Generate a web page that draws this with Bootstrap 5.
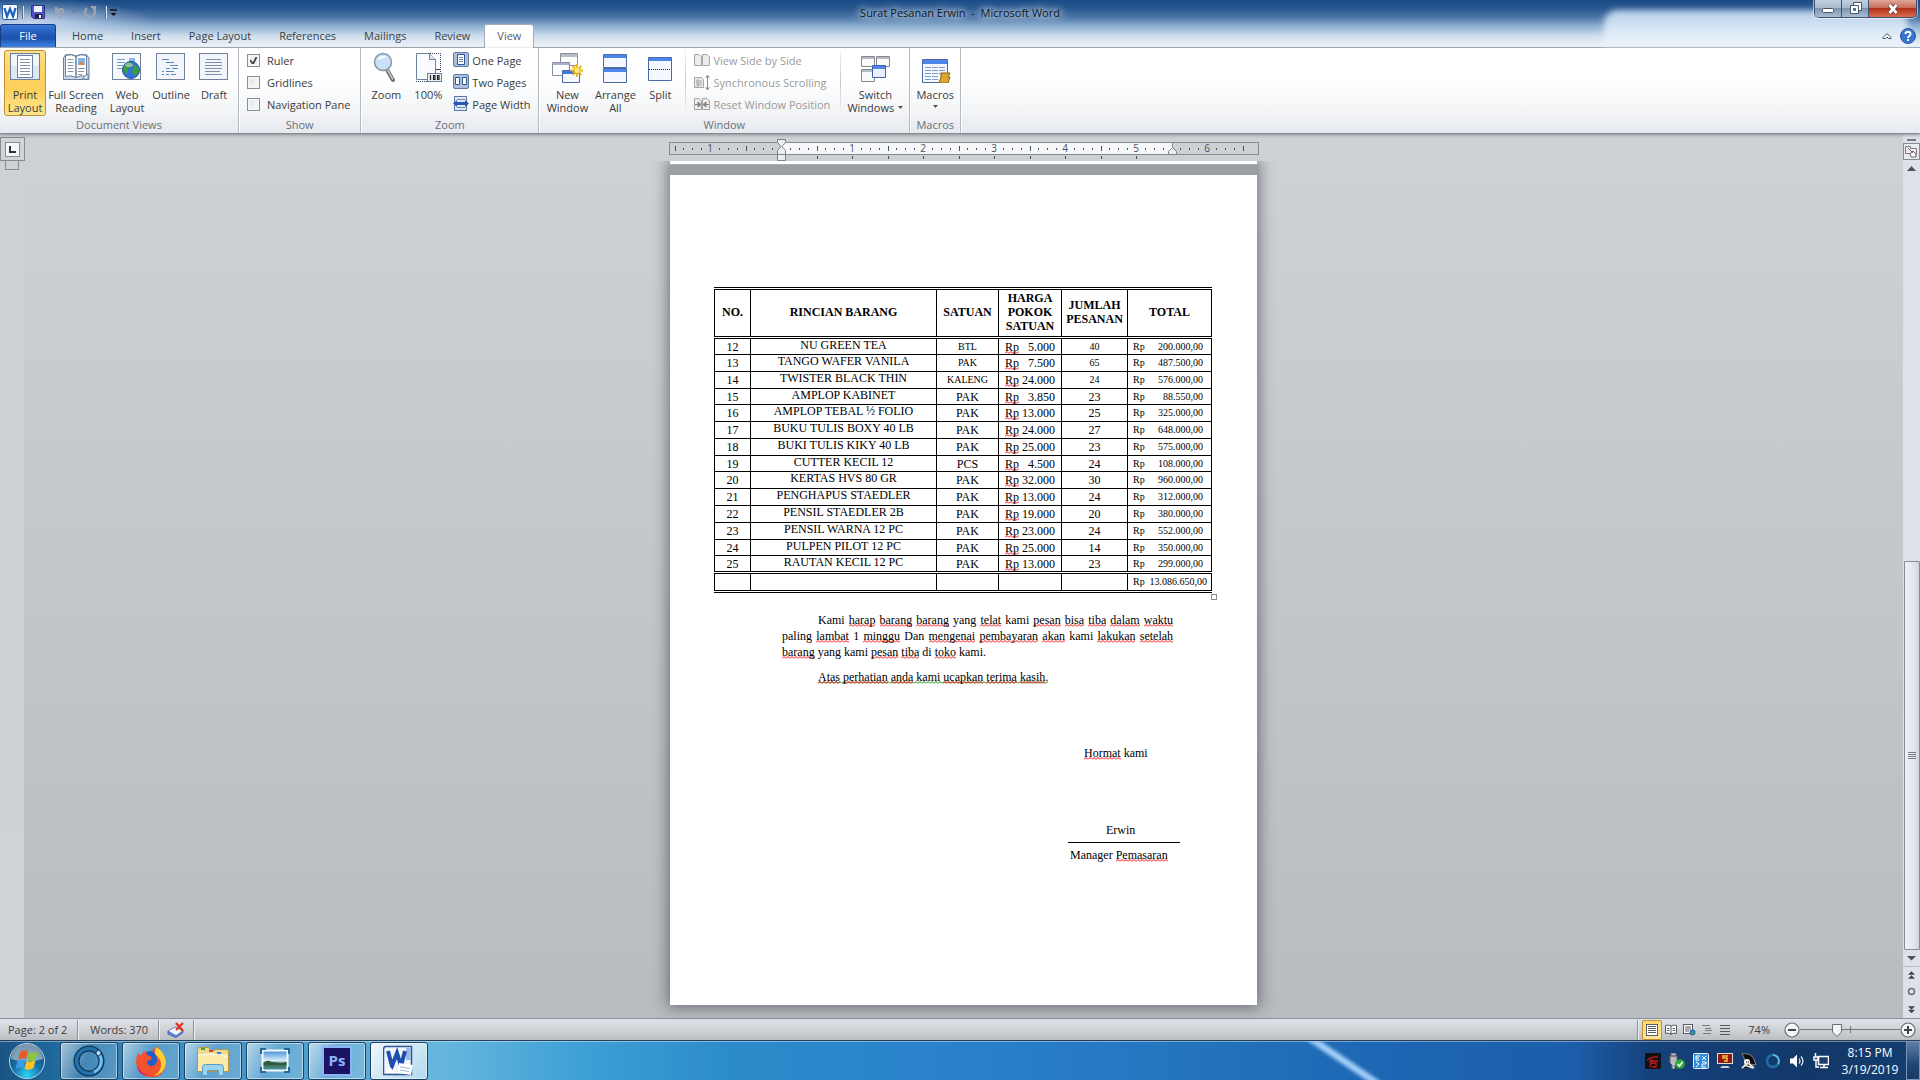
<!DOCTYPE html>
<html lang="id">
<head>
<meta charset="utf-8">
<meta name="viewport" content="width=device-width, initial-scale=1">
<title>Surat Pesanan Erwin - Microsoft Word</title>
<link href="https://cdn.jsdelivr.net/npm/bootstrap@5.3.0/dist/css/bootstrap.min.css" rel="stylesheet">
<style>
body{font-family:"Open Sans","Noto Sans",sans-serif;font-size:11px;line-height:13px;color:#3b3b3b;background:#c4c7cb}
button,input{font:inherit;color:inherit}
svg{display:block;flex:none}
a{text-decoration:none;color:inherit}
.btn-flat{background:none;border:0;padding:0}

/* title bar and tabs */
.glass{height:48px;border-bottom:1px solid #a3acb8;background:
 radial-gradient(ellipse 140px 26px at 30px 22px,rgba(225,235,250,.75),rgba(225,235,250,0) 90%),
 linear-gradient(#194b87 0,#27568e 8px,#5179a9 18px,#8caed0 26px,#cfdeec 36px,#eef4f8 47px)}
.reflection{right:12px;top:10px;width:304px;height:37px;border-radius:14px 14px 0 0;background:linear-gradient(#c3daf2,#d9e9f8 40%,#f0f6fc);filter:blur(3px);opacity:.9}
.title-row{height:24px}
.doc-title{color:#101820;font-size:11px;white-space:pre;text-shadow:0 0 6px #dbe8f5,0 0 8px #dbe8f5,0 0 12px #b9cfe6;padding:6px 0 0}
.quick{padding:4px 0 0 2px;gap:4px}
.qsep{width:1px;height:13px;background:#5f6f87;box-shadow:1px 0 #d8e2ee}
.win-btns{right:3px;top:0;height:18px;border:1px solid #3e526e;border-top:0;border-radius:0 0 5px 5px;overflow:hidden;box-shadow:0 0 0 1px rgba(255,255,255,.55)}
.win-btns button{background:linear-gradient(#c2cfde,#a9bace 45%,#7e94b0 50%,#a9bdd4);border-right:1px solid #3e526e;width:27px;display:flex;align-items:center;justify-content:center}
.win-btns .win-close{width:47px;border-right:0;background:linear-gradient(#dfa79c,#c96c58 45%,#b5301a 50%,#d86f50)}
.tab-row{height:23px;position:relative}
.tab-row a{padding:5px 14px 0;height:23px;font-size:11px;line-height:14px;color:#3a3f46}
.tab-row .file-tab{width:56px;color:#fff;background:linear-gradient(#3b78d6,#1f57b5 45%,#1c51ad 60%,#3f84e2);border:1px solid #173f8c;border-bottom:0;border-radius:3px 3px 0 0;text-align:center;padding:4px 0 0;margin-right:2px}
.tab-row .view-tab{background:#fff;border:1px solid #a3acb8;border-bottom:0;border-radius:3px 3px 0 0;height:24px;padding:4px 12px 0;color:#5a6068}

/* ribbon */
.ribbon{height:86px;background:linear-gradient(#fff 0,#fff 40%,#f2f4f6 75%,#e6e9ee);border-bottom:1px solid #868b92;position:relative;z-index:2;box-shadow:0 1px 3px rgba(90,95,105,.6)}
.rgroup{display:flex;flex-direction:column;border-right:1px solid #b5bac2;box-shadow:1px 0 #fff;height:85px}
.rgroup-body{display:flex;height:69px;padding-top:2px}
.rgroup-name{text-align:center;color:#6a7078;line-height:15px}
.big{height:66px;border:1px solid transparent;border-radius:3px;background:none;padding:0;display:flex;flex-direction:column;align-items:center;line-height:13px;white-space:nowrap}
.big svg{margin-bottom:5px}
.big.on{border-color:#c2902f;background:linear-gradient(#fbe08a,#fdd466 30%,#fdd05c 60%,#fee78e)}
.w40{width:40px}.w42{width:42px}.w46{width:46px}.w48{width:48px}.w60{width:60px}
.pe10{padding-right:10px}
.smallcol{display:flex;flex-direction:column;white-space:nowrap;margin-top:-1px}
.smallcol>*{height:22px;display:flex;align-items:center;gap:3px}
.smallcol .off{color:#9a9a9a}
.rsep{width:1px;height:62px;background:linear-gradient(#f4f5f7,#c3c7cd 50%,#f0f1f3)}
.box-check{appearance:none;width:13px;height:13px;border:1px solid #8a8f96;background:linear-gradient(135deg,#dcdfe3,#fff);box-shadow:inset 0 0 0 2px #f4f5f6;margin:0 4px 0 0}
.box-check:checked{background:url("data:image/svg+xml,%3Csvg xmlns='http://www.w3.org/2000/svg' width='11' height='11'%3E%3Cpath d='M2 5l3 4 4-8' fill='none' stroke='%23444' stroke-width='1.8'/%3E%3C/svg%3E") #eceef0}

/* document area */
.work{background:linear-gradient(#ced1d6,#b8bbc0);min-height:0}
.vruler{width:24px;background:linear-gradient(#ced1d6,#cfd2d7)}
.tabsel{width:25px;height:24px;border:1px solid #868b92;background:#d0d4d9;margin:3px 0 0}
.tabsel span{width:15px;height:15px;border:1px solid #868b92;background:#f6f7f9}
.vmark{width:14px;height:9px;border:1px solid #868b92;border-top:0;margin-left:5px}
.stack{width:587px}
.ruler{margin:5px 0 0 -1px;overflow:visible}
.sheets{box-shadow:0 0 14px 2px rgba(50,55,60,.6);background:#9b9ea2}
.sheets .prev{height:4px;background:#fff;border-bottom:1px solid #9fb0bd}
.paper{margin-top:10px;background:#fff;min-height:830px;padding:112px 44px 0;color:#000;font-family:"Liberation Serif",serif;font-size:12px;line-height:16px}
.clipper{clip-path:inset(0 -20px -20px -20px)}
.order{width:497px;table-layout:fixed;border-collapse:collapse;border:1px solid #000;border-width:3px 1px;border-style:double solid;line-height:14px}
.order th,.order td{border:1px solid #000;padding:0;text-align:center;vertical-align:middle}
.order th{height:49px;border-bottom:3px double #000;border-top:3px double #000;font-weight:bold;padding-bottom:2px}
.order td{height:17px}
.order tbody tr:nth-child(4) td,.order tbody tr:nth-child(8) td,.order tbody tr:nth-child(13) td{height:16px}
.order .item{vertical-align:top;line-height:12px}
.order .tiny{font-size:10px}
.order .price>div{display:flex;justify-content:space-between;padding:0 6px}
.order .sum{font-size:10px}
.order .sum>div{display:flex;justify-content:space-between;padding:0 8px 0 5px}
.order tfoot td{border-top:3px double #000;border-bottom:3px double #000;height:19px}
.order tfoot .sum>div{padding:0 4px 0 5px}
.endmark{width:6px;height:6px;border:1px solid #8a8a8a;margin:1px -4px 0 auto}
.sq,.gr{text-decoration:none;background:url("data:image/svg+xml,%3Csvg xmlns='http://www.w3.org/2000/svg' width='4' height='3'%3E%3Cpath d='M0 2.5L2 .5L4 2.5' fill='none' stroke='%23f00'/%3E%3C/svg%3E") repeat-x left bottom}
.gr{background-image:url("data:image/svg+xml,%3Csvg xmlns='http://www.w3.org/2000/svg' width='4' height='3'%3E%3Cpath d='M0 2.5L2 .5L4 2.5' fill='none' stroke='%23008a00'/%3E%3C/svg%3E")}
.letter{padding:12px 40px 0 68px}
.letter p{margin:0 0 9px;text-indent:36px;text-align:justify}
.sign{width:112px;margin:60px 33px 0 auto}
.sign-name{margin-top:61px;padding:0 0 4px 38px;border-bottom:1px solid #000}
.sign-role{padding:4px 0 0 2px;white-space:nowrap}

/* vertical scroll bar */
.vscroll{width:17px;background:#dde2ea}
.thumb{flex:388 0 0;border:1px solid #868b94;border-radius:1px;background:linear-gradient(90deg,#eef1f7,#e3e7ec 60%,#cfd4d9);width:16px}
.trough{flex:388 0 0}

/* status bar */
.status{height:22px;border-top:1px solid #8b9099;background:linear-gradient(#e0e3e9,#cfd3d7 50%,#bbbfc3);color:#3c3c3c}
.status .ssep{width:1px;height:20px;background:#8f9398;box-shadow:1px 0 #edf0f3}
.vbtn{width:18px;height:20px;display:flex;align-items:center;justify-content:center}
.vbtn.on{width:20px;background:linear-gradient(#fbd775,#fde49b);border:1px solid #c2902f;border-radius:2px}
.zoomtext{padding:0 14px 0 14px}
.zoombar{appearance:none;width:100px;height:20px;background:linear-gradient(#70757c,#70757c) center/100% 1px no-repeat,linear-gradient(#70757c,#70757c) 50px center/1px 7px no-repeat}
.zoombar::-webkit-slider-thumb{appearance:none;width:10px;height:14px;background:url("data:image/svg+xml,%3Csvg xmlns='http://www.w3.org/2000/svg' width='10' height='14'%3E%3Cpath d='M.5 1.5h9v7.500L5 13.500.5 9z' fill='%23f2f4f6' stroke='%23666c75'/%3E%3C/svg%3E")}

/* taskbar */
.taskbar{height:40px;border-top:1px solid #26405c;box-shadow:inset 0 1px rgba(255,255,255,.4);overflow:hidden;background:linear-gradient(90deg,#1b5484 0,#1f6a9e 3%,#3a8cc2 8%,#4f9fcd 16%,#66b6de 23%,#3fa1d6 30%,#2c8bca 38%,#2a81cb 50%,#2374bd 62%,#1d66b3 72%,#1c5ea9 82%,#15417c 86%,#123868 94%,#143d70)}
.streak{left:70%;top:-4px;width:12px;height:56px;transform:skewX(56deg);background:#a3d0fa;filter:blur(3px)}
.start{padding:0 14px 0 8px}
.task{width:58px;height:38px;margin-top:1px;border:1px solid #17415f;border-radius:3px;background:linear-gradient(115deg,rgba(255,255,255,.62),rgba(255,255,255,.14) 45%,rgba(255,255,255,.2));box-shadow:inset 0 0 0 1px rgba(255,255,255,.5);display:flex;align-items:center;justify-content:center;padding:0}
.task.on{background:linear-gradient(135deg,rgba(255,255,255,.9),rgba(255,255,255,.5))}
.clock{width:66px;color:#fff;font-size:12px;line-height:17px;text-align:center;padding-top:1px;margin:0 3px 0 0}
.peek{width:14px;border:1px solid #7d96b5;background:linear-gradient(#5f7fa6,#1f4674 60%,#153a69)}
</style>
<script src="https://cdn.jsdelivr.net/npm/bootstrap@5.3.0/dist/js/bootstrap.bundle.min.js"></script>
</head>
<body class="d-flex flex-column vh-100 overflow-hidden">

<header class="glass position-relative">
  <div class="reflection position-absolute"></div>
  <div class="title-row d-flex justify-content-center position-relative">
    <div class="quick position-absolute start-0 top-0 d-flex align-items-center">
      <svg width="16" height="16"><rect x=".5" y=".5" width="15" height="15" rx="1.500" fill="#f4f8fd" stroke="#2a5ca8"/><path d="M2.500 4l2.500 8.500L8 5l3 7.500L13.500 4" fill="none" stroke="#1a62c0" stroke-width="2.200"/></svg>
      <span class="qsep"></span>
      <button class="btn-flat ms-1" aria-label="Save"><svg width="14" height="16"><path d="M.5 1.500h13v13h-11l-2-2z" fill="#4f52c8" stroke="#32347f"/><path d="M3 2h8v6H3z" fill="#f2f5ff"/><path d="M4 10h7v4H4z" fill="#20223a"/><path d="M8 11h2v3H8z" fill="#fff"/></svg></button>
      <button class="btn-flat ms-1" aria-label="Undo"><svg width="26" height="16"><path d="M3 3v5h5M3 8c4-5 9-3 7 2l-3 4" fill="none" stroke="#9ca4b2" stroke-width="2.200"/><path d="M18 6h6l-3 3z" fill="#6c7a92"/></svg></button>
      <button class="btn-flat" aria-label="Repeat"><svg width="14" height="16"><path d="M4 4a5 5 0 1 0 6 0M8 3h4v4" fill="none" stroke="#9ca4b2" stroke-width="2.200"/></svg></button>
      <span class="qsep ms-1"></span>
      <button class="btn-flat" aria-label="Customize"><svg width="8" height="12"><path d="M0 4h7" stroke="#111" stroke-width="1.500"/><path d="M.5 7h6L3.500 10z" fill="#111"/></svg></button>
    </div>
    <div class="doc-title">Surat Pesanan Erwin  -  Microsoft Word</div>
    <div class="win-btns position-absolute d-flex">
      <button class="btn-flat" aria-label="Minimize"><svg width="12" height="12"><rect x=".5" y="5.500" width="11" height="4" rx="1" fill="#fff" stroke="#4a566a"/></svg></button>
      <button class="btn-flat" aria-label="Restore"><svg width="13" height="13"><path d="M4.500.5h8v8h-8z" fill="#fff" stroke="#4a566a"/><path d="M1.500 3.500h8v8h-8z" fill="#fff" stroke="#4a566a"/><path d="M4.500 6.500h2v2h-2z" fill="#8fa3bc" stroke="#4a566a"/></svg></button>
      <button class="btn-flat win-close" aria-label="Close"><svg width="14" height="12"><path d="M3.500 2l7 8M10.500 2l-7 8" stroke="#5a3a44" stroke-width="4.500"/><path d="M3.500 2l7 8M10.500 2l-7 8" stroke="#fff" stroke-width="2.800"/></svg></button>
    </div>
  </div>
  <nav class="tab-row d-flex">
    <a href="#" class="file-tab">File</a>
    <a href="#">Home</a><a href="#">Insert</a><a href="#">Page Layout</a><a href="#">References</a><a href="#">Mailings</a><a href="#">Review</a><a href="#" class="view-tab">View</a>
    <div class="ms-auto d-flex align-items-center pe-1 gap-2">
      <button class="btn-flat" aria-label="Minimize ribbon"><svg width="10" height="8"><path d="M1 5.500L5 1.500l4 4v1H6.500L5 5 3.500 6.500H1z" fill="#fff" stroke="#43505f"/></svg></button>
      <button class="btn-flat" aria-label="Help"><svg width="16" height="16"><circle cx="8" cy="8" r="7.500" fill="#3a76cf" stroke="#2556a4"/><path d="M5.500 6c0-3 5-3 5 0 0 2-2.500 1.800-2.500 4M8 11v2" fill="none" stroke="#fff" stroke-width="1.900"/></svg></button>
    </div>
  </nav>
</header>

<section class="ribbon d-flex">
  <div class="rgroup">
    <div class="rgroup-body px-1">
      <button class="big on w42"><svg width="32" height="32"><rect x="1.500" y="2.500" width="29" height="26" fill="#dbe7f3" stroke="#6d819d"/><path d="M2 4h28v11H2z" fill="#f1f6fb"/><rect x="8.500" y="4.500" width="15" height="22" fill="#fff" stroke="#6d819d"/><path d="M11 8.500h10M11 11.500h10M11 14.500h10M11 17.500h10M11 20.500h10M11 23.500h10" stroke="#7f90a8"/></svg>Print<br>Layout</button>
      <button class="big w60"><svg width="32" height="32"><path d="M3.500 6.500L5 5v-1q6-2 11 1 5-3 11-1v1l2 1.500v22H3.500z" fill="#cfdae8" stroke="#6d819d"/><path d="M5.500 4.500q6-2 10.500 1v21q-5-3-10.500-1zM26.500 4.500q-6-2-10.500 1v21q5-3 10.500-1z" fill="#fff" stroke="#6d819d"/><path d="M7.500 8.500h6M7.500 11.500h6M7.500 14.500h6M7.500 17.500h6M7.500 20.500h6M18 17.500h7M18 20.500h6M18 23.500h4" stroke="#8796ab"/><path d="M18 7h7v7h-7z" fill="#7fb4ea"/><path d="M18 14l3-4 4 4z" fill="#e8824c"/><path d="M22 28l6-5v5z" fill="#fff" stroke="#6d819d"/></svg>Full Screen<br>Reading</button>
      <button class="big w42"><svg width="32" height="32"><rect x="1.500" y="2.500" width="28" height="26" fill="#f6f9fd" stroke="#6d819d"/><path d="M6 8.500h8M6 11.500h8M6 14.500h6M6 17.500h5" stroke="#6f9ad0"/><path d="M18 7h6v5h-6z" fill="#8fb6e6"/><circle cx="20" cy="19" r="8.500" fill="#2f72d8" stroke="#244f9a"/><path d="M13 16q3-5 7-5l1 4-4 3-1 5q-4-2-3-7zM23 14l4 2 1 4-4 5-3-4z" fill="#3aa03c"/><ellipse cx="18" cy="14" rx="4" ry="2" fill="#fff" opacity=".4"/></svg>Web<br>Layout</button>
      <button class="big w46"><svg width="32" height="32"><rect x="1.500" y="2.500" width="28" height="26" fill="#f2f6fb" stroke="#6d819d"/><path d="M7 8.500h7M11 11.500h8M15 14.500h8M11 17.500h4M17 17.500h6M11 20.500h8M11 23.500h3M16 23.500h5M7 20.500h2M7 23.500h2" stroke="#5c86bf"/></svg>Outline</button>
      <button class="big w40"><svg width="32" height="32"><rect x="1.500" y="2.500" width="28" height="26" fill="#f2f6fb" stroke="#6d819d"/><path d="M8 8.500h15M7 11.500h17M7 14.500h17M7 17.500h17M7 20.500h15M7 23.500h17" stroke="#7f90a8"/></svg>Draft</button>
    </div>
    <div class="rgroup-name">Document Views</div>
  </div>
  <div class="rgroup">
    <div class="rgroup-body ps-2 pe10">
      <div class="smallcol">
        <label><input class="box-check" type="checkbox" checked>Ruler</label>
        <label><input class="box-check" type="checkbox">Gridlines</label>
        <label><input class="box-check" type="checkbox">Navigation Pane</label>
      </div>
    </div>
    <div class="rgroup-name">Show</div>
  </div>
  <div class="rgroup">
    <div class="rgroup-body ps-1 pe-2">
      <button class="big w42"><svg width="32" height="32"><path d="M16 17l7 12" stroke="#6b6f76" stroke-width="4" stroke-linecap="round"/><path d="M17 18l6 10.500" stroke="#d4d6da" stroke-width="1.500"/><circle cx="13" cy="11" r="8.500" fill="#c9e0f8" stroke="#8b96a5" stroke-width="1.500"/><path d="M7 9q4-6 11-3-6 1-11 3z" fill="#fff"/></svg>Zoom</button>
      <button class="big w42"><svg width="32" height="32"><path d="M4.500 2.500h13l6 6v20h-19z" fill="#fafcff" stroke="#6d819d"/><path d="M17.500 2.500v6h6" fill="#dfe8f3" stroke="#6d819d"/><path d="M18 2.500h10.500V30M4 30.500h12" fill="none" stroke="#33415a" stroke-dasharray="1 1"/><path d="M24 18.500h4" stroke="#33415a"/><rect x="15.500" y="22.500" width="14" height="8" fill="#eef2f8" stroke="#6d819d"/><path d="M18.500 24v5M21.500 24.500h1.500v4h-1.500zM25.500 24.500H27v4h-1.500z" fill="none" stroke="#222" stroke-width="1.200"/></svg>100%</button>
      <div class="smallcol ps-1">
        <button class="btn-flat"><svg width="16" height="16"><rect x=".5" y=".5" width="15" height="14" rx="1.500" fill="#a9bfdb" stroke="#6079a0"/><path d="M4.500 2.500h7v10h-7z" fill="#fff" stroke="#33558c"/><path d="M6 5.500h4M6 7.500h4M6 9.500h4" stroke="#6b87ae"/></svg>One Page</button>
        <button class="btn-flat"><svg width="16" height="16"><rect x=".5" y=".5" width="15" height="14" rx="1.500" fill="#a9bfdb" stroke="#6079a0"/><path d="M2.500 3.500h4v7h-4zM9.500 3.500h4v7h-4z" fill="#fff" stroke="#33558c"/></svg>Two Pages</button>
        <button class="btn-flat"><svg width="16" height="16"><rect x="1.500" y=".5" width="12" height="14" fill="#dfe8f4" stroke="#6079a0"/><path d="M4 3.500h8M4 11.500h8" stroke="#6b87ae"/><path d="M0 7.500L4 4v2h8V4l4 3.500-4 3.500V9H4v2z" fill="#2b58b4"/></svg>Page Width</button>
      </div>
    </div>
    <div class="rgroup-name">Zoom</div>
  </div>
  <div class="rgroup">
    <div class="rgroup-body ps-1 pe-1">
      <button class="big w48"><svg width="32" height="32"><path d="M9.500 2.500h17v12h-17z" fill="#fff" stroke="#8c9099"/><path d="M10 3h16v3H10z" fill="#b9bdc8"/><path d="M1.500 11.500h17v13h-17z" fill="#fff" stroke="#8790a3"/><path d="M2 12h16v2H2z" fill="#a6b3cf"/><path d="M11.500 19.500h17v12h-17z" fill="#f5f8ff" stroke="#4a6aa8"/><path d="M12 20h16v3H12z" fill="#3f78e0"/><path d="M26 13v13M19.500 19.500h13M21.500 15l9 9M30.500 15l-9 9" stroke="#f0b400" stroke-width="1.800"/><circle cx="26" cy="19.500" r="2.500" fill="#ffec80"/></svg>New<br>Window</button>
      <button class="big w48"><svg width="32" height="32"><path d="M4.500 3.500h23v13h-23zM4.500 17.500h23v14h-23z" fill="#f5f8ff" stroke="#4a6aa8"/><path d="M5 4h22v3H5zM5 18h22v3H5z" fill="#4f86ea"/></svg>Arrange<br>All</button>
      <button class="big w42"><svg width="32" height="32"><path d="M4.500 6.500h23v23h-23z" fill="#f5f8ff" stroke="#4a6aa8"/><path d="M5 7h22v3H5z" fill="#4f86ea"/><path d="M5 18.500h22" stroke="#222" stroke-dasharray="1 1"/></svg>Split</button>
      <span class="rsep ms-1 me-2"></span>
      <div class="smallcol pe10">
        <button class="btn-flat off" disabled><svg width="16" height="16"><path d="M.5 2.500H5L7.500 5v8.500h-7zM8.500 2.500H13L15.500 5v8.500h-7z" fill="#ececec" stroke="#a5a5a5"/></svg>View Side by Side</button>
        <button class="btn-flat off" disabled><svg width="16" height="16"><path d="M.5 3.500h7l2 2v8h-9z" fill="#ececec" stroke="#a5a5a5"/><path d="M2 7h6M2 9h6M2 11h6M4 5v8" stroke="#a5a5a5"/><path d="M13.500 2v13M11.500 4l2-3 2 3M11.500 13l2 3 2-3" fill="none" stroke="#8f8f8f"/></svg>Synchronous Scrolling</button>
        <button class="btn-flat off" disabled><svg width="16" height="16"><path d="M.5 2.500H5L7.500 5v8.500h-7zM8.500 2.500H13L15.500 5v8.500h-7z" fill="#ececec" stroke="#a5a5a5"/><path d="M1 8.500h4M15 8.500h-4M4 6l3 2.500L4 11zM12 6L9 8.500l3 2.500z" fill="#858585" stroke="#858585"/></svg>Reset Window Position</button>
      </div>
      <span class="rsep me-1"></span>
      <button class="big w60"><svg width="32" height="32"><path d="M2.500 5.500h13v10h-13zM17.500 5.500h13v10h-13zM2.500 18.500h13v12h-13z" fill="#fafafa" stroke="#85888f"/><path d="M3 6h12v2H3zM18 6h12v2H18zM3 19h12v2H3z" fill="#b9bcc4"/><path d="M13.500 14.500h13v12h-13z" fill="#e9f1ff" stroke="#3c64ae"/><path d="M14 15h12v3H14z" fill="#4f86ea"/></svg>Switch<br><span class="d-flex align-items-center gap-1">Windows<svg class="m-0" width="5" height="4"><path d="M0 0h5L2.500 3z" fill="#555"/></svg></span></button>
    </div>
    <div class="rgroup-name">Window</div>
  </div>
  <div class="rgroup">
    <div class="rgroup-body px-1">
      <button class="big w42"><svg width="32" height="32"><path d="M3.500 8.500h25v23h-25z" fill="#f5f8ff" stroke="#4a6aa8"/><path d="M4 9h24v4H4z" fill="#4f86ea"/><path d="M6 16.500h20M6 19.500h20M6 22.500h20M6 25.500h14M6 28.500h13" stroke="#7e9ac6" stroke-dasharray="6 1"/><path d="M22 22h9l-2 4h2l-2 6h-9l2-6z" fill="#dba72e" stroke="#8a6414"/></svg>Macros<svg class="mt-1" width="5" height="4"><path d="M0 0h5L2.500 3z" fill="#555"/></svg></button>
    </div>
    <div class="rgroup-name">Macros</div>
  </div>
</section>

<main class="work d-flex flex-grow-1">
  <div class="vruler">
    <button class="btn-flat tabsel d-flex align-items-center justify-content-center position-relative" aria-label="Tab selector"><span class="d-flex align-items-center justify-content-center"><svg width="7" height="7"><path d="M1 0v6h6" fill="none" stroke="#333" stroke-width="2"/></svg></span></button>
    <div class="vmark"></div>
  </div>
  <div class="flex-grow-1 d-flex justify-content-center">
    <div class="stack">
      <svg class="ruler" id="ruler" width="590" height="22" font-family="Open Sans, sans-serif" font-size="10" fill="#4c5058" text-anchor="middle">
        <rect x=".5" y="3.500" width="589" height="12" fill="#cdd1d6" stroke="#868b92"/>
        <rect x="113" y="4" width="390" height="11" fill="#f6f7f9"/>
        <path d="M503.500 4v11" stroke="#868b92"/>
      </svg>
      <div class="clipper"><div class="sheets">
        <div class="prev"></div>
        <article class="paper">
          <table class="order">
            <colgroup><col style="width:36px"><col style="width:186px"><col style="width:62px"><col style="width:63px"><col style="width:66px"><col style="width:84px"></colgroup>
            <thead><tr><th>NO.</th><th>RINCIAN BARANG</th><th>SATUAN</th><th>HARGA<br>POKOK<br>SATUAN</th><th>JUMLAH<br>PESANAN</th><th>TOTAL</th></tr></thead>
            <tbody id="rows"></tbody>
            <tfoot><tr><td></td><td></td><td></td><td></td><td></td><td class="sum"><div><span>Rp</span><span>13.086.650,00</span></div></td></tr></tfoot>
          </table>
          <div class="endmark"></div>
          <div class="letter">
            <p>Kami <u class="sq">harap</u> <u class="sq">barang</u> <u class="sq">barang</u> yang <u class="sq">telat</u> kami <u class="sq">pesan</u> <u class="sq">bisa</u> <u class="sq">tiba</u> <u class="sq">dalam</u> <u class="sq">waktu</u> paling <u class="sq">lambat</u> 1 <u class="sq">minggu</u> Dan <u class="sq">mengenai</u> <u class="sq">pembayaran</u> <u class="sq">akan</u> kami <u class="sq">lakukan</u> <u class="sq">setelah</u> <u class="sq">barang</u> yang kami <u class="sq">pesan</u> <u class="sq">tiba</u> di <u class="sq">toko</u> kami.</p>
            <p><span class="gr"><u class="sq">Atas</u> <u class="sq">perhatian</u> <u class="sq">anda</u> kami <u class="sq">ucapkan</u> <u class="sq">terima</u> <u class="sq">kasih</u>.</span></p>
          </div>
          <div class="sign">
            <div class="ps-3 text-nowrap"><u class="sq">Hormat</u> kami</div>
            <div class="sign-name">Erwin</div>
            <div class="sign-role">Manager <u class="sq">Pemasaran</u></div>
          </div>
        </article>
      </div></div>
    </div>
  </div>
  <div class="vscroll d-flex flex-column align-items-center pt-1">
    <svg width="17" height="36"><path d="M4 2h9" stroke="#777c83" stroke-width="2"/><rect x=".5" y="5.500" width="16" height="16" fill="#e8ebf0" stroke="#868b92"/><path d="M2.500 8.500h5v2h6v6h-4M2.500 8.500v7h5" fill="#f6eef2" stroke="#7c7478"/><path d="M5 10l5 5M7 16l3-3 3 3v3H8z" fill="#fff" stroke="#70686c"/><path d="M4 33h9L8.500 28z" fill="#4e5157"/></svg>
    <div class="trough"></div>
    <div class="thumb d-flex align-items-center justify-content-center"><svg width="8" height="8"><path d="M0 .5h8M0 2.500h8M0 4.500h8M0 6.500h8" stroke="#7a7f87"/></svg></div>
    <svg width="17" height="68"><path d="M4 6h9l-4.500 4.500z" fill="#4e5157"/><path d="M0 16.500h17" stroke="#b9bec5"/><path d="M5.500 24.500l3-3 3 3zM5.500 28.500l3-3 3 3z" fill="#444" stroke="#444" stroke-width=".5"/><circle cx="8.500" cy="41.500" r="3" fill="none" stroke="#6a6d72" stroke-width="1.500"/><path d="M5.500 56.500h6l-3 3zM5.500 60h6l-3 3z" fill="#444" stroke="#444" stroke-width=".5"/></svg>
  </div>
</main>

<footer class="status d-flex align-items-center">
  <span class="ps-2 pe10 text-nowrap">Page: 2 of 2</span><span class="ssep"></span>
  <span class="ps-2 pe10 ms-1 text-nowrap">Words: 370</span><span class="ssep"></span>
  <button class="btn-flat px-2" aria-label="Proofing"><svg width="18" height="16"><path d="M1 9l7-4 8 4-7 5z" fill="#fff" stroke="#6c7ea8"/><path d="M1 9v3l8 3.500 7-5V9" fill="#5f86d8" stroke="#4562a6"/><path d="M2 9l6-3 7 3-6 4z" fill="#f4f4f8"/><path d="M9 1l7 8M16 1l-7 7" stroke="#e0301e" stroke-width="2.200"/></svg></button><span class="ssep"></span>
  <div class="ms-auto d-flex align-items-center">
    <span class="ssep me-1"></span>
    <button class="btn-flat vbtn on" aria-label="Print Layout"><svg width="12" height="12"><rect x=".5" y=".5" width="11" height="11" fill="#fff" stroke="#5a5f66"/><path d="M2 2.500h8M2 4.500h8M2 6.500h8M2 8.500h8" stroke="#5a5f66"/></svg></button>
    <button class="btn-flat vbtn" aria-label="Full Screen Reading"><svg width="12" height="12"><path d="M.5 1.500q3-1 5.500.5 2.500-1.500 5.500-.5v8q-3-1-5.500.5-2.500-1.500-5.500-.5zM6 2v9" fill="#fff" stroke="#555a61"/><path d="M2 4.500h2.500M2 6.500h2.500M7.500 4.500H10M7.500 6.500H10" stroke="#555a61"/></svg></button>
    <button class="btn-flat vbtn" aria-label="Web Layout"><svg width="13" height="12"><rect x=".5" y=".5" width="9" height="9" fill="#fff" stroke="#555a61"/><path d="M2 3h6M2 5h6M2 7h4" stroke="#555a61"/><circle cx="9.500" cy="8.500" r="3" fill="#2e6bb4"/><path d="M8 8l2-1 1 2-2 2z" fill="#49a54a"/></svg></button>
    <button class="btn-flat vbtn" aria-label="Outline"><svg width="12" height="12"><path d="M1 1.500h8M4 4.500h6M4 6.500h7M2 9.500h8" stroke="#777c83"/></svg></button>
    <button class="btn-flat vbtn" aria-label="Draft"><svg width="12" height="12"><path d="M1 1.500h10M1 4.500h10M1 7.500h10M1 10.500h10" stroke="#555a61"/></svg></button>
    <span class="zoomtext">74%</span>
    <button class="btn-flat" aria-label="Zoom out"><svg width="16" height="16"><circle cx="8" cy="8" r="7" fill="#f2f4f6" stroke="#666c75" stroke-width="1.200"/><path d="M4 8h8" stroke="#444" stroke-width="2"/></svg></button>
    <input class="zoombar" type="range" min="0" max="100" value="36" aria-label="Zoom level">
    <button class="btn-flat me-1" aria-label="Zoom in"><svg width="16" height="16"><circle cx="8" cy="8" r="7" fill="#f2f4f6" stroke="#666c75" stroke-width="1.200"/><path d="M4 8h8M8 4v8" stroke="#444" stroke-width="2"/></svg></button>
  </div>
</footer>

<footer class="taskbar d-flex position-relative">
  <div class="streak position-absolute"></div>
  <button class="btn-flat start" aria-label="Start"><svg width="38" height="38"><defs><radialGradient id="orb" cx=".5" cy=".9" r=".9"><stop offset="0" stop-color="#2cd4f8"/><stop offset=".45" stop-color="#1671a8"/><stop offset="1" stop-color="#123a60"/></radialGradient></defs><circle cx="19" cy="19" r="17.500" fill="url(#orb)" stroke="#bcd6e8"/><path d="M3 17a16 15 0 0 1 32 0q-16 5-32 0z" fill="#fff" opacity=".45"/><path d="M12 10q4-3 8-1l-2 8q-4-2-8 1z" fill="#ea5a24"/><path d="M21 10q4 2 9-1l-2 8q-4 3-9 1z" fill="#8cc63c"/><path d="M9.500 19q4-3 8-1l-2 8q-4-2-8 1z" fill="#3f9be8"/><path d="M18.500 19q4 2 9-1l-2 8q-4 3-9 1z" fill="#fcc321"/></svg></button>
  <div class="d-flex gap-1">
    <button class="task" aria-label="Browser"><svg width="32" height="32"><circle cx="16" cy="16" r="12.500" fill="none" stroke="#0f3557" stroke-width="6"/><circle cx="16" cy="16" r="12.500" fill="none" stroke="#2470aa" stroke-width="3.500"/><path d="M26 9a12 12 0 0 1-5 18" fill="none" stroke="#6cc0ee" stroke-width="3"/><circle cx="25.500" cy="8" r="2.500" fill="#bfe4fa" stroke="#123f66"/></svg></button>
    <button class="task" aria-label="Firefox"><svg width="32" height="32"><circle cx="16" cy="17" r="11" fill="#1b5fd0"/><path d="M3 8l3 3q1-4 5-5l1 4 5 2-1 3-4 1q0 5 5 5 5-1 5-6 0-6-5-9 3-4 6-5l1 5q8 5 7 13-2 13-15 14Q2 30 1 17q0-5 2-9z" fill="#f4522e"/><path d="M21 2q9 5 10 15-1 12-13 14 9-4 8-13-1-5-6-9 0-4 1-7z" fill="#ffcf32"/><path d="M2 20q3 9 12 10-7 2-11-5z" fill="#d3226e"/></svg></button>
    <button class="task" aria-label="Explorer"><svg width="36" height="32"><path d="M2.500 5.500q0-3 2-3h9l2 3h4l1-1h11q2 0 2 2v20H2.500z" fill="#efd88c" stroke="#b99543"/><path d="M3 9h30v17H3z" fill="#fbeaa9"/><path d="M6 3h4v2H6z" fill="#3ba53b"/><path d="M14 5h4v2h-4z" fill="#d9452c"/><path d="M22 7h4v2h-4z" fill="#3d7fd0"/><path d="M7.500 30.500v-8q0-3 3-3h15q3 0 3 3v8h-5v-5h-11v5z" fill="#9cd3ee" stroke="#5a9cc4"/><path d="M3 10q15-3 30 2" stroke="#fff" fill="none"/></svg></button>
    <button class="task" aria-label="Photos"><svg width="32" height="32"><defs><linearGradient id="sky" x2="0" y2="1"><stop offset="0" stop-color="#3f8fd8"/><stop offset=".5" stop-color="#d6ecfa"/><stop offset=".7" stop-color="#3a6b4c"/><stop offset="1" stop-color="#4b9bb4"/></linearGradient></defs><rect x="3.500" y="5.500" width="25" height="20" fill="url(#sky)" stroke="#f5f8fa" stroke-width="2"/><path d="M4.500 18q4-4 8-1l10 1 5-1v3h-23z" fill="#2e5a3e"/><path d="M2 9V4h5M25 4h5v5M30 22v5h-5M7 27H2v-5" fill="none" stroke="#27679c" stroke-width="2"/></svg></button>
    <button class="task" aria-label="Photoshop"><svg width="32" height="32"><rect x="1" y="1" width="30" height="30" fill="#8cb4f4"/><rect x="3" y="3" width="26" height="26" fill="#1b1464"/><text x="16" y="21" text-anchor="middle" font-family="Open Sans, sans-serif" font-weight="700" font-size="15" fill="#8cb8fa">Ps</text></svg></button>
    <button class="task on" aria-label="Word"><svg width="32" height="32"><path d="M2.500 1.500h26v28h-28V5q0-3.500 2-3.500z" fill="#f1f5fb" stroke="#2b579a" stroke-width="1.500"/><path d="M23 3h5v12h-5z" fill="#9db9e4"/><path d="M5 6l4 15 5-13 4 13 4-15" fill="none" stroke="#1c4fae" stroke-width="4"/><path d="M3 28l3-7 7 7zM16 18l14 2-2 10-13-2z" fill="#fff"/><path d="M17 22l10 1.500M17 25l9 1.500" stroke="#9fb4dc"/></svg></button>
  </div>
  <div class="ms-auto d-flex align-items-center gap-2">
    <svg width="16" height="16"><rect width="16" height="16" rx="1" fill="#111"/><path d="M2 7q5-4 11-3M4 8h9M5 10h6v4H7M7 6l-2 8" fill="none" stroke="#c01a22" stroke-width="1.300"/></svg>
    <svg width="16" height="16"><path d="M2 0h5v3H2zM1 3h7v7l-2 2v4H3v-4l-2-2z" fill="#b9bcc2" stroke="#666"/><circle cx="11" cy="11" r="4.800" fill="#2fa836"/><path d="M8.500 11l2 2 3-4" fill="none" stroke="#fff" stroke-width="1.500"/></svg>
    <svg width="16" height="16"><rect x=".5" y=".5" width="15" height="15" rx="1" fill="#2f8ddc" stroke="#e6f2fc"/><path d="M3 3h4M3 3v4h3M3 5h3M9 3l4 4M13 3L9 7M9 9h4v2H9v3h4M3 9l3 2-3 3" fill="none" stroke="#fff"/></svg>
    <svg width="16" height="16"><rect x=".5" y=".5" width="15" height="10" fill="#8f1a12" stroke="#e0dcd8"/><path d="M5 3h6M5 5h5v3H7" fill="none" stroke="#f7c24a" stroke-width="1.500"/><path d="M5 13h6l2 2H3z" fill="#c9ccd0"/></svg>
    <svg width="16" height="16"><path d="M1 1q8-2 12 5l2 6-6-1Q3 8 1 1z" fill="#0d0d0d" stroke="#888"/><circle cx="6" cy="9" r="3" fill="#fff"/><path d="M1 15l6-5 6 5M3 12l9 3" stroke="#e8e4da" stroke-width="1.800"/><path d="M5 9h1M7 9h1" stroke="#000"/></svg>
    <svg width="16" height="16"><circle cx="8" cy="8" r="6" fill="none" stroke="#1f6fa4" stroke-width="2.500"/><path d="M8 2a6 6 0 0 1 5 9" fill="none" stroke="#6fc0ea" stroke-width="1.500"/></svg>
    <svg width="16" height="16"><path d="M1 5.500h3l4-4v13l-4-4H1z" fill="#fff"/><path d="M10 5.500q2 2.500 0 5M12 3.500q4 4.500 0 9" fill="none" stroke="#e8f0f8" stroke-width="1.200"/></svg>
    <svg width="16" height="16"><path d="M5.500 3.500h10v8h-10z" fill="#1a3f6c" stroke="#fff" stroke-width="1.500"/><path d="M7 14.500h8M11 12v2M2.500 0v4M1 4h4v3H1zM3 7v7h3" fill="none" stroke="#fff" stroke-width="1.500"/></svg>
    <div class="clock">8:15 PM<br>3/19/2019</div>
  </div>
  <button class="btn-flat peek" aria-label="Show desktop"></button>
</footer>

<script>
const items = [
 [12,"NU GREEN TEA","BTL","5.000",40,"200.000,00"],[13,"TANGO WAFER VANILA","PAK","7.500",65,"487.500,00"],
 [14,"TWISTER BLACK THIN","KALENG","24.000",24,"576.000,00"],[15,"AMPLOP KABINET","PAK","3.850",23,"88.550,00"],
 [16,"AMPLOP TEBAL ½ FOLIO","PAK","13.000",25,"325.000,00"],[17,"BUKU TULIS BOXY 40 LB","PAK","24.000",27,"648.000,00"],
 [18,"BUKI TULIS KIKY 40 LB","PAK","25.000",23,"575.000,00"],[19,"CUTTER KECIL 12","PCS","4.500",24,"108.000,00"],
 [20,"KERTAS HVS 80 GR","PAK","32.000",30,"960.000,00"],[21,"PENGHAPUS STAEDLER","PAK","13.000",24,"312.000,00"],
 [22,"PENSIL STAEDLER 2B","PAK","19.000",20,"380.000,00"],[23,"PENSIL WARNA 12 PC","PAK","23.000",24,"552.000,00"],
 [24,"PULPEN PILOT 12 PC","PAK","25.000",14,"350.000,00"],[25,"RAUTAN KECIL 12 PC","PAK","13.000",23,"299.000,00"]];
document.getElementById("rows").innerHTML = items.map(([n,name,unit,price,qty,total]) => {
  const s = n < 15 ? " class='tiny'" : "";
  return `<tr><td>${n}</td><td class="item">${name}</td><td${s}>${unit}</td><td class="price"><div><u class="sq">Rp</u><span>${price}</span></div></td><td${s}>${qty}</td><td class="sum"><div><span>Rp</span><span>${total}</span></div></td></tr>`;
}).join("");

// Ruler scale: 71 px to the inch, zero at the left margin
let marks = "";
for (let e = -12; e <= 52; e++) {
  const x = Math.round(112 + e * 71 / 8), inch = e / 8;
  if (x > 585) break;
  if (e === 0 || e === 44) continue;
  if (e % 8 === 0) marks += `<text x="${x}" y="13">${Math.abs(inch)}</text>`;
  else marks += `<rect x="${x}" y="${e % 4 === 0 ? 7 : 9}" width="1" height="${e % 4 === 0 ? 5 : 2}"/>`;
  if (e % 4 === 0 && e > 0 && e < 44) marks += `<rect x="${x}" y="17" width="1" height="3"/>`;
}
marks += `<g fill="#eceef0" stroke="#7c8188"><path d="M108.500.5h8v3L113 7.500l3.500 4v4h-8v-4l3.500-4-3.500-4z"/><path d="M108.500 15.500h8v6h-8zM499.500 15.500v-3l4-4 4 4v3z"/></g>`;
document.getElementById("ruler").insertAdjacentHTML("beforeend", marks);
</script>
</body>
</html>
